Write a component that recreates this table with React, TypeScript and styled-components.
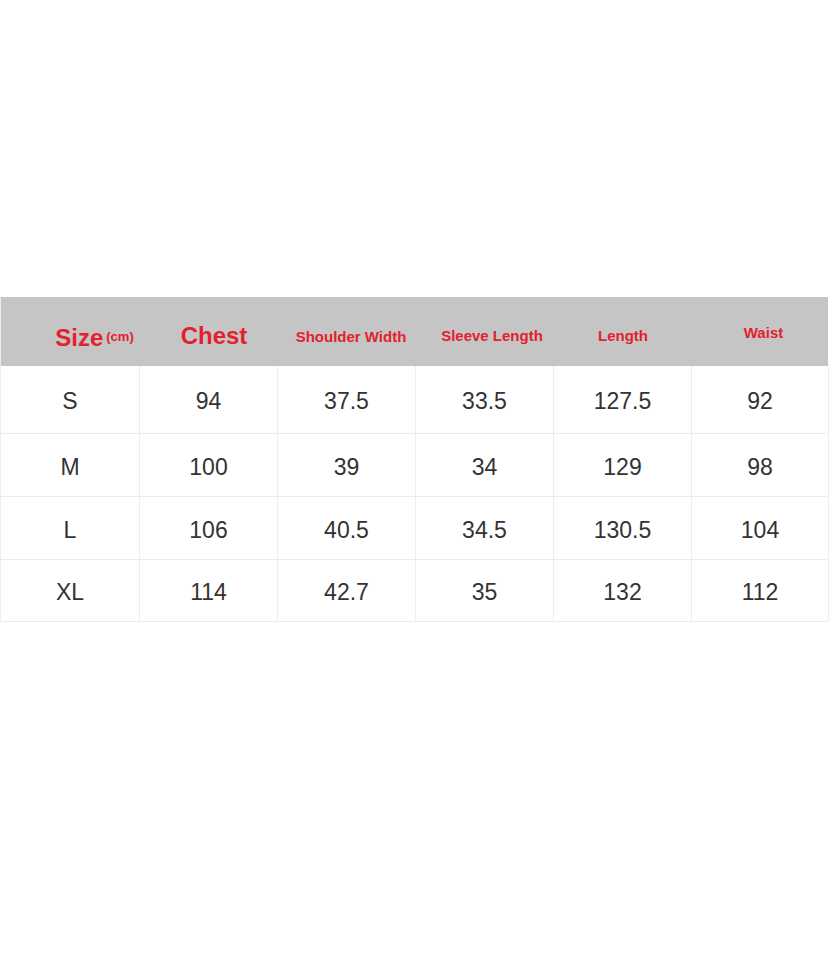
import React from 'react'
import styled, { createGlobalStyle } from 'styled-components'

const GlobalStyle = createGlobalStyle`
  html, body {
    margin: 0;
    padding: 0;
    background: #ffffff;
  }
  body {
    font-family: 'Liberation Sans', Arial, sans-serif;
  }
`

// dx/dy nudge the header labels, which in the original sit a bit off-centre
const headers = [
  { label: 'Size', unit: '(cm)', size: 24, dx: 48, dy: 4 },
  { label: 'Chest', size: 24, dx: 10, dy: 2 },
  { label: 'Shoulder Width', size: 15, dx: 8, dy: 6 },
  { label: 'Sleeve Length', size: 15, dx: 14, dy: 5 },
  { label: 'Length', size: 15, dx: 0, dy: 5 },
  { label: 'Waist', size: 15, dx: 6, dy: 2 },
]

const rows = [
  { height: 68, cells: ['S', '94', '37.5', '33.5', '127.5', '92'] },
  { height: 63, cells: ['M', '100', '39', '34', '129', '98'] },
  { height: 63, cells: ['L', '106', '40.5', '34.5', '130.5', '104'] },
  { height: 62, cells: ['XL', '114', '42.7', '35', '132', '112'] },
]

export default function App(): JSX.Element {
  return (
    <>
      <GlobalStyle />
      <Page>
        <Table>
          <HeaderRow>
            {headers.map((h) => (
              <HeaderCell key={h.label} $dx={h.dx} $dy={h.dy}>
                <HeaderText $size={h.size}>{h.label}</HeaderText>
                {h.unit && <Unit>{h.unit}</Unit>}
              </HeaderCell>
            ))}
          </HeaderRow>
          {rows.map((r) => (
            <Row key={r.cells[0]} $height={r.height}>
              {r.cells.map((c, i) => (
                <Cell key={i}>{c}</Cell>
              ))}
            </Row>
          ))}
        </Table>
      </Page>
    </>
  )
}

const Page = styled.div`
  width: 830px;
  height: 960px;
  padding-top: 297px;
  box-sizing: border-box;
`
const Table = styled.div`
  width: 828px;
  display: flex;
  flex-direction: column;
  border-left: 1px solid #ececec;
  box-sizing: border-box;
`
const HeaderRow = styled.div`
  display: grid;
  grid-template-columns: 139px repeat(4, 138px) 137px;
  height: 69px;
  background: #c5c5c5;
`
const HeaderCell = styled.div<{ $dx: number; $dy: number }>`
  display: flex;
  align-items: baseline;
  justify-content: center;
  gap: 3px;
  padding-top: ${(p) => 23 + p.$dy}px;
  padding-left: ${(p) => p.$dx}px;
  box-sizing: border-box;
  white-space: nowrap;
  color: #e3212d;
  font-weight: bold;
`
const HeaderText = styled.span<{ $size: number }>`
  font-size: ${(p) => p.$size}px;
  line-height: ${(p) => (p.$size > 20 ? 28 : 22)}px;
`
const Unit = styled.span`
  font-size: 13px;
  position: relative;
  top: -5px;
`
const Row = styled.div<{ $height: number }>`
  display: grid;
  grid-template-columns: 139px repeat(4, 138px) 137px;
  height: ${(p) => p.$height}px;
  border-bottom: 1px solid #ececec;
  box-sizing: border-box;
`
const Cell = styled.div`
  display: flex;
  align-items: center;
  justify-content: center;
  padding-top: 4px;
  border-right: 1px solid #ececec;
  color: #333333;
  font-size: 23px;
`
